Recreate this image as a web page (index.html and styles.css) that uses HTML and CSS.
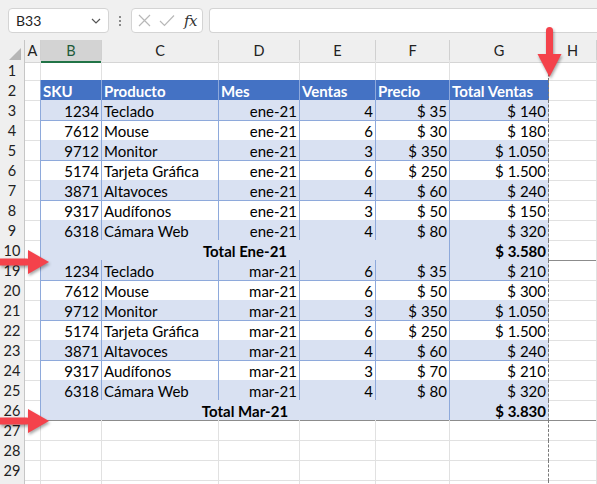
FILE: index.html
```html
<!DOCTYPE html>
<html lang="es">
<head>
<meta charset="utf-8">
<title>Excel - Totales</title>
<link rel="stylesheet" href="styles.css">
</head>
<body>
<div class="app">
  <div class="fbar">
    <div class="namebox"><span>B33</span>
      <svg class="chev" width="10" height="6" viewBox="0 0 10 6"><path d="M1 1 L5 5 L9 1" fill="none" stroke="#555" stroke-width="1.2"/></svg>
    </div>
    <div class="vdots"><i></i><i></i><i></i></div>
    <div class="fxbox">
      <svg width="13" height="13" viewBox="0 0 13 13"><path d="M1 1 L12 12 M12 1 L1 12" stroke="#b8b8b8" stroke-width="1.2" fill="none"/></svg>
      <svg width="16" height="13" viewBox="0 0 16 13"><path d="M1 7 L5.5 11.5 L15 1.5" stroke="#b8b8b8" stroke-width="1.2" fill="none"/></svg>
      <span class="fx">fx</span>
    </div>
    <div class="finput"></div>
  </div>

  <div class="sheet">
    <div class="row">
      <div class="corner"><svg width="14" height="14" viewBox="0 0 14 14"><path d="M13 1 L13 13 L1 13 Z" fill="#b6b6b6"/></svg></div>
      <div class="ch">A</div><div class="ch sel">B</div><div class="ch">C</div><div class="ch">D</div><div class="ch">E</div><div class="ch">F</div><div class="ch">G</div><div class="ch">H</div>
    </div>

    <div class="row"><div class="rh">1</div><div class="c"></div><div class="c"></div><div class="c"></div><div class="c"></div><div class="c"></div><div class="c"></div><div class="c pg"></div><div class="c"></div></div>

    <div class="row"><div class="rh">2</div><div class="c ta"></div>
      <div class="c th">SKU</div><div class="c th">Producto</div><div class="c th">Mes</div><div class="c th">Ventas</div><div class="c th">Precio</div><div class="c th pg">Total Ventas</div><div class="c"></div></div>

    <div class="row"><div class="rh">3</div><div class="c ta"></div>
      <div class="c t b r">1234</div><div class="c t b">Teclado</div><div class="c t b r">ene-21</div><div class="c t b r">4</div><div class="c t b r">$ 35</div><div class="c t b r pg">$ 140</div><div class="c"></div></div>
    <div class="row"><div class="rh">4</div><div class="c ta"></div>
      <div class="c t r">7612</div><div class="c t">Mouse</div><div class="c t r">ene-21</div><div class="c t r">6</div><div class="c t r">$ 30</div><div class="c t r pg">$ 180</div><div class="c"></div></div>
    <div class="row"><div class="rh">5</div><div class="c ta"></div>
      <div class="c t b r">9712</div><div class="c t b">Monitor</div><div class="c t b r">ene-21</div><div class="c t b r">3</div><div class="c t b r">$ 350</div><div class="c t b r pg">$ 1.050</div><div class="c"></div></div>
    <div class="row"><div class="rh">6</div><div class="c ta"></div>
      <div class="c t r">5174</div><div class="c t">Tarjeta Gráfica</div><div class="c t r">ene-21</div><div class="c t r">6</div><div class="c t r">$ 250</div><div class="c t r pg">$ 1.500</div><div class="c"></div></div>
    <div class="row"><div class="rh">7</div><div class="c ta"></div>
      <div class="c t b r">3871</div><div class="c t b">Altavoces</div><div class="c t b r">ene-21</div><div class="c t b r">4</div><div class="c t b r">$ 60</div><div class="c t b r pg">$ 240</div><div class="c"></div></div>
    <div class="row"><div class="rh">8</div><div class="c ta"></div>
      <div class="c t r">9317</div><div class="c t">Audífonos</div><div class="c t r">ene-21</div><div class="c t r">3</div><div class="c t r">$ 50</div><div class="c t r pg">$ 150</div><div class="c"></div></div>
    <div class="row"><div class="rh">9</div><div class="c ta"></div>
      <div class="c t b r">6318</div><div class="c t b">Cámara Web</div><div class="c t b r">ene-21</div><div class="c t b r">4</div><div class="c t b r">$ 80</div><div class="c t b r pg">$ 320</div><div class="c"></div></div>
    <div class="row brk"><div class="rh">10</div><div class="c ta"></div>
      <div class="c t b tot">Total Ene-21</div><div class="c t b r bold pg">$ 3.580</div><div class="c"></div></div>

    <div class="row"><div class="rh">19</div><div class="c ta"></div>
      <div class="c t b r">1234</div><div class="c t b">Teclado</div><div class="c t b r">mar-21</div><div class="c t b r">6</div><div class="c t b r">$ 35</div><div class="c t b r pg">$ 210</div><div class="c"></div></div>
    <div class="row"><div class="rh">20</div><div class="c ta"></div>
      <div class="c t r">7612</div><div class="c t">Mouse</div><div class="c t r">mar-21</div><div class="c t r">6</div><div class="c t r">$ 50</div><div class="c t r pg">$ 300</div><div class="c"></div></div>
    <div class="row"><div class="rh">21</div><div class="c ta"></div>
      <div class="c t b r">9712</div><div class="c t b">Monitor</div><div class="c t b r">mar-21</div><div class="c t b r">3</div><div class="c t b r">$ 350</div><div class="c t b r pg">$ 1.050</div><div class="c"></div></div>
    <div class="row"><div class="rh">22</div><div class="c ta"></div>
      <div class="c t r">5174</div><div class="c t">Tarjeta Gráfica</div><div class="c t r">mar-21</div><div class="c t r">6</div><div class="c t r">$ 250</div><div class="c t r pg">$ 1.500</div><div class="c"></div></div>
    <div class="row"><div class="rh">23</div><div class="c ta"></div>
      <div class="c t b r">3871</div><div class="c t b">Altavoces</div><div class="c t b r">mar-21</div><div class="c t b r">4</div><div class="c t b r">$ 60</div><div class="c t b r pg">$ 240</div><div class="c"></div></div>
    <div class="row"><div class="rh">24</div><div class="c ta"></div>
      <div class="c t r">9317</div><div class="c t">Audífonos</div><div class="c t r">mar-21</div><div class="c t r">3</div><div class="c t r">$ 70</div><div class="c t r pg">$ 210</div><div class="c"></div></div>
    <div class="row"><div class="rh">25</div><div class="c ta"></div>
      <div class="c t b r">6318</div><div class="c t b">Cámara Web</div><div class="c t b r">mar-21</div><div class="c t b r">4</div><div class="c t b r">$ 80</div><div class="c t b r pg">$ 320</div><div class="c"></div></div>
    <div class="row brk"><div class="rh">26</div><div class="c ta"></div>
      <div class="c t b tot">Total Mar-21</div><div class="c t b r bold pg">$ 3.830</div><div class="c"></div></div>

    <div class="row"><div class="rh">27</div><div class="c"></div><div class="c"></div><div class="c"></div><div class="c"></div><div class="c"></div><div class="c"></div><div class="c pg"></div><div class="c"></div></div>
    <div class="row"><div class="rh">28</div><div class="c"></div><div class="c"></div><div class="c"></div><div class="c"></div><div class="c"></div><div class="c"></div><div class="c pg"></div><div class="c"></div></div>
    <div class="row"><div class="rh">29</div><div class="c"></div><div class="c"></div><div class="c"></div><div class="c"></div><div class="c"></div><div class="c"></div><div class="c pg"></div><div class="c"></div></div>
    <div class="row"><div class="rh"></div><div class="c"></div><div class="c"></div><div class="c"></div><div class="c"></div><div class="c"></div><div class="c"></div><div class="c pg"></div><div class="c"></div></div>
  </div>

  <svg class="arrows" width="597" height="484" viewBox="0 0 597 484">
    <g fill="#f4424b">
      <rect x="546" y="27" width="7" height="30" rx="3.5"/>
      <polygon points="537.5,54 561.5,54 549.5,77"/>
      <rect x="-4" y="258.5" width="34" height="7" rx="3.5"/>
      <polygon points="28,250 28,274 49,262"/>
      <rect x="-4" y="417.5" width="34" height="7" rx="3.5"/>
      <polygon points="28,409 28,433 49,421"/>
    </g>
  </svg>
</div>
</body>
</html>
```

FILE: styles.css
```css
* { box-sizing: border-box; }

html, body {
  margin: 0;
  padding: 0;
  background: #ffffff;
}

.app {
  position: relative;
  width: 597px;
  height: 484px;
  overflow: hidden;
  font-family: Lato, "Open Sans", "Liberation Sans", sans-serif;
  font-size: 15px;
  color: #000;
}

/* ---------- formula bar ---------- */
.fbar {
  height: 40px;
  background: #f0f0f0;
  display: flex;
  align-items: flex-start;
  padding: 8px 0 0 8px;
}

.namebox {
  width: 101px;
  height: 25px;
  background: #fff;
  border: 1px solid #d4d4d4;
  border-radius: 4px;
  display: flex;
  align-items: center;
  justify-content: space-between;
  padding: 0 7px 0 7px;
  font-size: 14px;
  color: #222;
}

.vdots {
  width: 22px;
  height: 25px;
  display: flex;
  flex-direction: column;
  align-items: center;
  justify-content: center;
  gap: 2px;
}

.vdots i {
  display: block;
  width: 2px;
  height: 2px;
  background: #8a8a8a;
}

.fxbox {
  width: 72px;
  height: 25px;
  background: #fff;
  border: 1px solid #d4d4d4;
  border-radius: 4px;
  display: flex;
  align-items: center;
  padding: 0 4px 0 6px;
  gap: 8px;
}

.fx {
  font-family: "DejaVu Serif", "Liberation Serif", serif;
  font-style: italic;
  font-size: 15px;
  color: #333;
  letter-spacing: -0.5px;
  margin-left: 1px;
}

.finput {
  flex: 1;
  height: 25px;
  margin-left: 6px;
  background: #fff;
  border: 1px solid #d4d4d4;
  border-right: none;
  border-radius: 4px 0 0 4px;
}

/* ---------- sheet ---------- */
.row {
  display: grid;
  grid-template-columns: 25px 16px 61px 117px 81px 76px 74px 99px 48px;
  height: 20px;
}

.corner {
  background: #efefef;
  border-right: 1px solid #c6c6c6;
  display: flex;
  align-items: flex-end;
  justify-content: flex-end;
  padding: 0 2px 2px 0;
}

.ch {
  background: #efefef;
  border-right: 1px solid #d0d0d0;
  border-bottom: 1px solid #d5d5d5;
  text-align: center;
  line-height: 20px;
  padding-top: 1px;
  font-size: 14.5px;
  color: #222;
}

.ch.sel {
  background: #d3d3d3;
  color: #1e5a3a;
  border-bottom: 2px solid #217346;
}

.rh {
  background: #efefef;
  border-right: 1px solid #c6c6c6;
  border-bottom: 1px solid #d8d8d8;
  text-align: center;
  line-height: 19px;
  padding-top: 1px;
  font-size: 14.5px;
  color: #222;
}

.c {
  border-right: 1px solid #e1e1e1;
  border-bottom: 1px solid #e1e1e1;
  padding: 2px 2px 0;
  line-height: 18px;
  white-space: nowrap;
  overflow: hidden;
}

.c.ta { border-right-color: #8ea9db; }

.c.t {
  border-right-color: #8ea9db;
  border-bottom-color: #8ea9db;
}

.c.b { background: #d9e1f2; }

.c.th {
  background: #4472c4;
  color: #fff;
  font-weight: bold;
  border-right-color: #8ea9db;
  border-bottom-color: #8ea9db;
}

.r { text-align: right; }

.bold { font-weight: bold; }

.tot {
  grid-column: span 5;
  text-align: center;
  font-weight: bold;
}

.row .c.pg {
  border-right: 1px dashed #7a7a7a;
}

.row.brk .c {
  border-bottom: 1px solid #8c8c8c;
}

/* ---------- overlay arrows ---------- */
.arrows {
  position: absolute;
  left: 0;
  top: 0;
  pointer-events: none;
  filter: drop-shadow(1px 2px 1.5px rgba(0, 0, 0, 0.35));
}
```
